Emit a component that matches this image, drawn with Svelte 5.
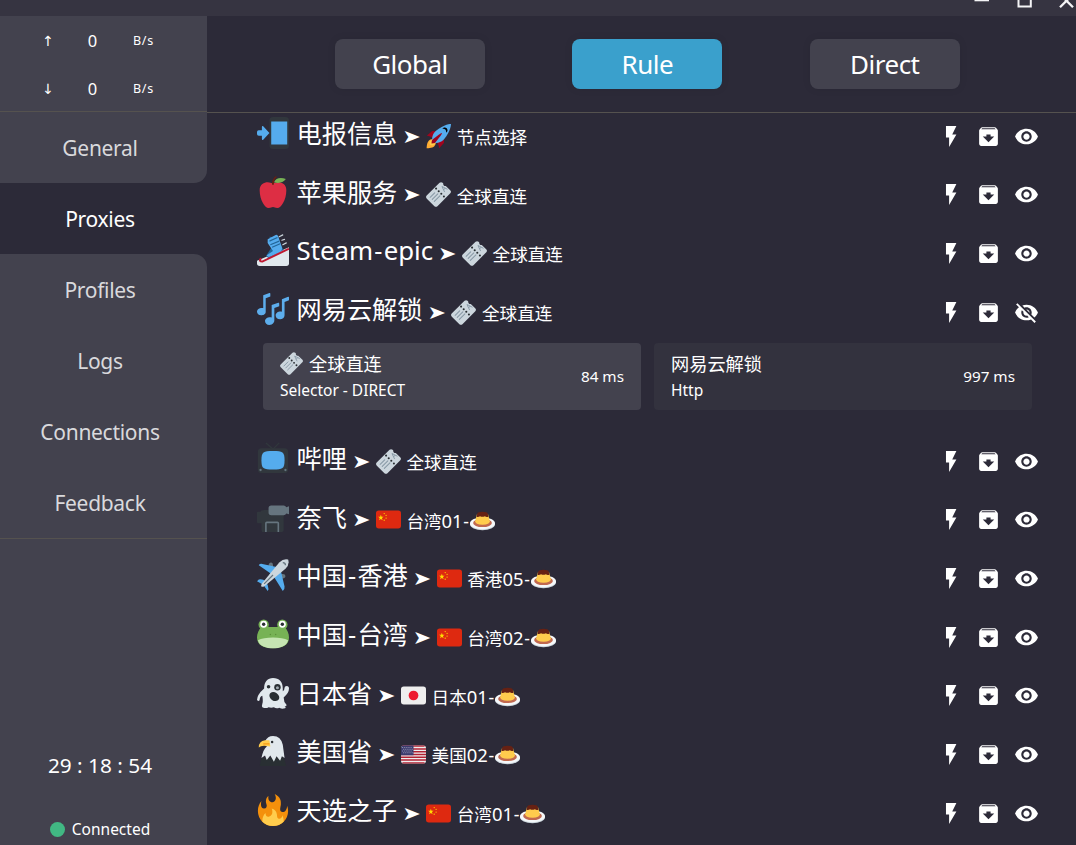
<script>
  const navItems = ['General', 'Proxies', 'Profiles', 'Logs', 'Connections', 'Feedback'];
  const modes = ['Global', 'Rule', 'Direct'];
  const groups = [
    { icon: 'phone', name: '电报信息', nowIcon: 'rocket', now: '节点选择' },
    { icon: 'apple', name: '苹果服务', nowIcon: 'ticket', now: '全球直连' },
    { icon: 'ski', name: 'Steam-epic', nowIcon: 'ticket', now: '全球直连' },
    {
      icon: 'notes', name: '网易云解锁', nowIcon: 'ticket', now: '全球直连',
      proxies: [
        { icon: 'ticket', name: '全球直连', type: 'Selector - DIRECT', delay: '84 ms', selected: true },
        { name: '网易云解锁', type: 'Http', delay: '997 ms' }
      ]
    },
    { icon: 'tv', name: '哔哩', nowIcon: 'ticket', now: '全球直连' },
    { icon: 'camera', name: '奈飞', nowIcon: 'cn', now: '台湾01-', tail: 'custard' },
    { icon: 'plane', name: '中国-香港', nowIcon: 'cn', now: '香港05-', tail: 'custard' },
    { icon: 'frog', name: '中国-台湾', nowIcon: 'cn', now: '台湾02-', tail: 'custard' },
    { icon: 'ghost', name: '日本省', nowIcon: 'jp', now: '日本01-', tail: 'custard' },
    { icon: 'eagle', name: '美国省', nowIcon: 'us', now: '美国02-', tail: 'custard' },
    { icon: 'fire', name: '天选之子', nowIcon: 'cn', now: '台湾01-', tail: 'custard' }
  ];

  // Splits a label into hyphens, Latin runs and CJK runs so each can be sized on its own.
  const runs = (text) =>
    text.match(/-|[A-Za-z0-9]+|[^A-Za-z0-9-]+/g).map((t) => ({
      t,
      kind: t === '-' ? 'hyphen' : /^[A-Za-z0-9]/.test(t) ? 'latin' : 'cjk'
    }));
</script>

{#snippet label(text)}{#each runs(text) as r}<span class={r.kind}>{r.t}</span>{/each}{/snippet}

{#snippet emoji(name, cls)}
  <svg class={cls} viewBox="0 0 36 36" aria-hidden="true">
    {#if name === 'phone'}
      <path fill="#31373D" d="M14 4a4 4 0 0 1 4-4h14a4 4 0 0 1 4 4v28a4 4 0 0 1-4 4H18a4 4 0 0 1-4-4z" />
      <path fill="#55ACEE" d="M16 5h18v26H16zM14 18l-7-7.500q-1.500-1-1.500 1V15H2a2 2 0 0 0-2 2v2a2 2 0 0 0 2 2h3.500v3.500q0 2 1.500 1z" />
    {:else if name === 'rocket'}
      <path fill="#A0041E" d="M1 17l8-7 16 1 1 16-7 8s0-6-6-12-12-6-12-6z" />
      <path fill="#FFAC33" d="M.973 35s-.036-7.979 2.985-11S15 21.187 15 21.187 15 29 12 32 .973 35 .973 35z" />
      <circle fill="#FFCC4D" cx="9" cy="27" r="4" />
      <path fill="#55ACEE" d="M36 0S26 0 14 10c-6 5-6 14-4 16s11 2 16-4C36 10 36 0 36 0z" />
      <path d="M27 5c-1.623 0-3.013.971-3.641 2.360.502-.227 1.055-.360 1.641-.360 2.209 0 4 1.791 4 4 0 .586-.133 1.139-.359 1.640C30.030 12.013 31 10.623 31 9c0-2.209-1.791-4-4-4z" />
      <path fill="#A0041E" d="M8 28s0-4 1-5 13-11 14-10-9 13-10 14-5 1-5 1z" />
    {:else if name === 'apple'}
      <path fill="#DD2E44" d="M24 7c-3 0-3 1-6 1s-3-1-6-1c-4 0-9 2-9 9 0 11 6 20 10 20 3 0 3-1 5-1s2 1 5 1c4 0 10-9 10-20 0-7-5-9-9-9z" />
      <path fill="#77B255" d="M19 7c2-5 8-6 13.500-3.500C29 8 24 8.500 19 7z" />
      <path fill="#662113" d="M18 10c-1 0-1.500-1-1-3 .5-3 2-5.500 4-6.700 1-.6 1.700.7.800 1.400C20 3.500 19 6 19 9c0 .6-.4 1-1 1z" />
    {:else if name === 'ticket'}
      <path fill="#CCD6DD" d="M1 19.500 19.500 1.200q2.200-2 4.400 0l1 1q-.4 1.700.8 2.800t2.800.7l6.300 6q2.200 2.200.2 4.500L16.500 34.800q-2.200 2-4.400 0L1.200 24q-2.200-2.200-.2-4.500z" />
      <g stroke="#8899A6" stroke-width="1.500" stroke-linecap="round">
        <path d="m6 22 6.500-6.500M9 25l8-8M12 28l8-8" />
      </g>
      <path d="m23 6.500 8 4M23 6.500l3.800 8M27.800 8.700l-2.600 2.800" stroke="#8899A6" stroke-width="1.400" fill="none" />
      <g fill="#292F33"><circle cx="14.500" cy="9.500" r="1.500" /><circle cx="18.300" cy="13.300" r="1.500" /><circle cx="22" cy="17" r="1.500" /><circle cx="25.800" cy="20.800" r="1.500" /></g>
    {:else if name === 'ski'}
      <path fill="#E1E8ED" d="M36 15v18q0 3-3 3H3q-3 0-3-3v-3z" />
      <path fill="#226699" d="m14 3 8 1 8 14-17 9-3-2 7-11z" />
      <path fill="#55ACEE" d="M12 6 21 1q2-1 3 2l4 12q1 4-3 6l-9 4q-4 2-5-1l7-5-6-9z" />
      <path stroke="#226699" stroke-width="1.300" d="m14 8 9-4M15 12l10-4M17 15l9-4" />
      <path fill="none" stroke="#BE1931" stroke-width="2.200" stroke-linecap="round" d="m4 28q-2 3 2 3l29-14" />
      <path stroke="#CCD6DD" stroke-width="1.300" stroke-linecap="round" d="m25 3 4-2M28 7l3-1M29 12l4-2" />
    {:else if name === 'notes'}
      <g fill="#5DADEC">
        <path d="M7 2.500 14 0q1-.3 1 1v3L9.800 6v15c0 3-3 4-5 4-3 0-4.800-2-4.800-4 0-3 4-5 7-4z" />
        <path d="M16.500 13.500 24 11q1-.3 1 1v3l-5.500 2v14c0 3-3 5-5.500 5-3 0-5-2-5-4.500 0-3 4-5 7.500-4z" />
        <path d="M28 7 35 4.200q1-.4 1 1v3L31 10v15c0 3-2.500 4.500-5 4.500-3 0-5-2-5-4.300 0-3 4-5 7-4z" />
      </g>
    {:else if name === 'tv'}
      <path fill="none" stroke="#31373D" stroke-width="1.500" d="m10 1 8 7 7-7" />
      <rect x="1" y="7" width="34" height="28" rx="4" fill="#31373D" />
      <path fill="#55ACEE" d="M18 10c11 0 13 1 13 10.500S29 31 18 31 5 30 5 20.500 7 10 18 10z" />
      <circle cx="4" cy="31.500" r="1.300" fill="#66757F" /><circle cx="32" cy="31.500" r="1.300" fill="#66757F" />
    {:else if name === 'camera'}
      <path fill="#31373D" d="M0 13q0-1 1-1h3q0-2 4-2h22v23q0 2-2 2H7q-2 0-2-3v-7H1q-1 0-1-1z" />
      <path fill="#66757F" d="M16 5h14q2 0 3 2l3-1v9l-3-1q-1 2-3 2H16q-3 0-3-3V8q0-3 3-3z" />
      <path fill="none" stroke="#66757F" stroke-width="1.800" d="M10 35V25q0-1 1-1h12q1 0 1 1v10" />
    {:else if name === 'plane'}
      <path fill="#66757F" d="M13 8q0-4 3-4 2 0 2 3v4zM27 22q5 0 5-3 0-2-3-2h-4z" />
      <path fill="#55ACEE" d="M2 7q1-2 4-1.500l16 3.500 5 5 4 17q.5 3-2 5L19 20 10 25q3 5 3 9l-1 2-5-7-7-4 2-2q4-1 8 2l5-9z" />
      <path fill="#CCD6DD" d="M6 27 25 4q5-5 10-3.500Q37 6 32 11L9 30q-3 2-4 1t1-4z" />
      <path fill="none" stroke="#66757F" stroke-width="1.400" d="m8 28 10-10M29 4q3 0 3 3" />
    {:else if name === 'frog'}
      <path fill="#77B255" d="M36 22C36 31 28 34 18 34S0 31 0 22C0 17 2 13 5 10h26c3 3 5 7 5 12z" />
      <circle cx="7.500" cy="7.500" r="5.800" fill="#77B255" /><circle cx="28.500" cy="7.500" r="5.800" fill="#77B255" />
      <circle cx="7.500" cy="7" r="3.900" fill="#fff" /><circle cx="28.500" cy="7" r="3.900" fill="#fff" />
      <circle cx="7.500" cy="7" r="1.900" fill="#292F33" /><circle cx="28.500" cy="7" r="1.900" fill="#292F33" />
      <path fill="#C6E5B3" d="M1 25q6-3 17-3t17 3c-2 7-9 9-17 9S3 32 1 25z" />
      <circle cx="15" cy="18.500" r=".8" fill="#5C913B" /><circle cx="21" cy="18.500" r=".8" fill="#5C913B" />
    {:else if name === 'ghost'}
      <path fill="#E1E8ED" d="M8 13C8 5 12 1 18 1c7 0 11 4 11 12v3q2-1 2-4 0-2 2.500-2T36 13q0 5-6 10 0 5 3 8 1 2-2 2 3 2-1 2.500-2 .5-5-1-3 1.500-6-.5-3 1-6 0-3 2-7 0-1-1 0-4 1-2 0-9-3 1-3 5-1 2-3 0Q0 20 8 13z" />
      <g fill="#292F33"><circle cx="13" cy="11" r="2" /><circle cx="23" cy="11.500" r="3.600" /><ellipse cx="19.500" cy="22" rx="6" ry="4.600" transform="rotate(35 19.500 22)" /></g>
      <circle cx="23" cy="12" r="1.700" fill="#9FA8AF" />
    {:else if name === 'eagle'}
      <path fill="#292F33" d="M5 26 3 35h30l-3-10z" />
      <path fill="#E1E8ED" d="M9 7Q12 1 18 1q9 0 11 10l2 15-3-2-2 5-4-5-3 6-4-7-4 5-2-5-4 3q2-10 6-13z" />
      <path fill="#FFCC4D" d="M14 6H9Q2 7 2 14q2-2 6-2l7 1z" /><path stroke="#F4900C" stroke-width="1.200" d="M7 10h7" />
      <circle cx="17" cy="8" r="1.400" fill="#292F33" />
    {:else if name === 'fire'}
      <path fill="#F4900C" d="M35 19c0-2.062-.367-4.039-1.040-5.868-.460 5.389-3.333 8.157-6.335 6.868-2.812-1.208-.917-5.917-.777-8.164.236-3.809-.012-8.169-6.931-11.794 2.875 5.500.333 8.917-2.333 9.125-2.958.231-5.667-2.542-4.667-7.042-3.238 2.386-3.332 6.402-2.333 9 1.042 2.708-.042 4.958-2.583 5.208-2.840.280-4.418-3.041-2.963-8.333C2.520 10.965 1 14.805 1 19c0 9.389 7.611 17 17 17s17-7.611 17-17z" />
      <path fill="#FFCC4D" d="M28.394 23.999c.148 3.084-2.561 4.293-4.019 3.709-2.106-.843-1.541-2.291-2.083-5.291s-2.625-5.083-5.708-6c2.250 6.333-1.247 8.667-3.080 9.084-1.872.426-3.753-.001-3.968-4.007C7.352 23.668 6 26.676 6 30c0 .368.023.730.055 1.090C9.125 34.124 13.342 36 18 36s8.875-1.876 11.945-4.910c.032-.360.055-.722.055-1.090 0-2.187-.584-4.236-1.606-6.001z" />
    {:else if name === 'custard'}
      <ellipse cx="18" cy="23.500" rx="18" ry="8.500" fill="#CCD6DD" /><ellipse cx="18" cy="22" rx="18" ry="8.500" fill="#F5F8FA" />
      <ellipse cx="18" cy="21.500" rx="13.500" ry="6" fill="#C1694F" />
      <path fill="#FFCC4D" d="M10 9h16l2.500 10q0 5-10.500 5T7.500 19z" />
      <path fill="#662113" d="M10.500 8q1-2.500 7.500-2.500T25.500 8l1 4.500q-3 1-5-.5-4 1.500-7 0-3 1.500-5 .5z" />
    {:else if name === 'cn'}
      <rect y="5" width="36" height="26" rx="4" fill="#DE2910" />
      <path fill="#FFDE02" d="m7 11 1 3h3l-2.400 2 .9 3L7 17.200 4.500 19l.9-3L3 14h3z" />
      <g fill="#FFDE02"><circle cx="11.800" cy="9.500" r=".9" /><circle cx="14.500" cy="12" r=".9" /><circle cx="14.500" cy="16" r=".9" /><circle cx="11.800" cy="19" r=".9" /></g>
    {:else if name === 'jp'}
      <rect y="5" width="36" height="26" rx="4" fill="#EEE" /><circle cx="18" cy="18" r="7" fill="#ED1B2F" />
    {:else if name === 'us'}
      <rect y="5" width="36" height="26" rx="4" fill="#EEE" />
      <path stroke="#B22334" stroke-width="2" d="M2 6h32M0 10h36M0 14h36M0 18h36M0 22h36M0 26h36M2 30h32" />
      <path fill="#3C3B6E" d="M4 5h14v14H0V9q0-4 4-4z" />
      <path stroke="#fff" stroke-width="1" stroke-dasharray="1 2" d="M2 8h15M3.500 10.500h14M2 13h15M3.500 15.500h14" />
    {/if}
  </svg>
{/snippet}

<div class="window">
  <header class="titlebar">
    <svg width="104" height="16" viewBox="0 0 104 16" fill="none" stroke="#f4f4f6">
      <path stroke-width="2.600" d="M2.500 0h14.500" />
      <path stroke-width="2" d="M46.500-6v12.500h12.300V-6" />
      <path stroke-width="2.300" d="m88 7.300 13-13M101 7.300l-13-13" />
    </svg>
  </header>
  <div class="body">
    <aside>
      <div class="traffic">
        <div><i>↑</i><b>0</b><span>B/s</span></div>
        <div><i>↓</i><b>0</b><span>B/s</span></div>
      </div>
      <nav>
        {#each navItems as item, i}
          <div class="nav-item" class:active={i === 1} class:before={i === 0} class:after={i === 2}><span>{item}</span></div>
        {/each}
      </nav>
      <div class="status">
        <div class="time">29 : 18 : 54</div>
        <div class="connected"><i></i><span>Connected</span></div>
      </div>
    </aside>
    <main>
      <div class="modes">
        {#each modes as mode}
          <button class:chosen={mode === 'Rule'}>{mode}</button>
        {/each}
      </div>
      <div class="list">
        {#each groups as g}
          <div class="group">
            {@render emoji(g.icon, 'big')}
            <span class="name">{@render label(g.name)}</span>
            <span class="arrow">➤</span>
            {@render emoji(g.nowIcon, 'small')}
            <span class="now">{@render label(g.now)}</span>
            {#if g.tail}{@render emoji(g.tail, 'small tail')}{/if}
            <div class="actions">
              <svg class="bolt" viewBox="0 0 24 24"><path d="M7 2v11h3v9l7-12h-4l4-8z" /></svg>
              <svg viewBox="0 0 24 24"><path d="M20.540 5.230l-1.390-1.680C18.880 3.210 18.470 3 18 3H6c-.470 0-.880.210-1.160.550L3.460 5.230C3.170 5.570 3 6.020 3 6.500V19c0 1.100.9 2 2 2h14c1.100 0 2-.9 2-2V6.500c0-.480-.170-.930-.460-1.270zM12 17.500L6.500 12H10v-2h4v2h3.500L12 17.500zM5.120 5l.810-1h12l.940 1H5.120z" /></svg>
              {#if g.proxies}
                <svg viewBox="0 0 24 24"><path d="M12 7c2.760 0 5 2.240 5 5 0 .650-.130 1.260-.360 1.830l2.920 2.920c1.510-1.260 2.700-2.890 3.430-4.750-1.730-4.390-6-7.500-11-7.500-1.400 0-2.740.250-3.980.7l2.160 2.160C10.740 7.130 11.350 7 12 7zM2 4.270l2.280 2.280.460.460C3.080 8.300 1.780 10.020 1 12c1.730 4.390 6 7.500 11 7.500 1.550 0 3.030-.3 4.380-.840l.420.420L19.730 22 21 20.730 3.270 3 2 4.270zM7.530 9.800l1.550 1.550c-.050.210-.080.430-.080.650 0 1.660 1.340 3 3 3 .220 0 .440-.030.650-.080l1.550 1.550c-.670.330-1.410.530-2.200.530-2.760 0-5-2.240-5-5 0-.790.2-1.530.530-2.200zm4.310-.780l3.150 3.150.020-.160c0-1.660-1.340-3-3-3l-.170.010z" /></svg>
              {:else}
                <svg viewBox="0 0 24 24"><path d="M12 4.500C7 4.500 2.730 7.610 1 12c1.730 4.390 6 7.500 11 7.500s9.270-3.110 11-7.500c-1.730-4.390-6-7.500-11-7.500zM12 17c-2.760 0-5-2.240-5-5s2.240-5 5-5 5 2.240 5 5-2.240 5-5 5zm0-8c-1.660 0-3 1.340-3 3s1.340 3 3 3 3-1.340 3-3-1.340-3-3-3z" /></svg>
              {/if}
            </div>
          </div>
          {#if g.proxies}
            <div class="proxies">
              {#each g.proxies as p}
                <div class="proxy" class:selected={p.selected}>
                  <div class="info">
                    <div class="pname">{#if p.icon}{@render emoji(p.icon, 'tiny')}{/if}<span>{p.name}</span></div>
                    <div class="ptype">{p.type}</div>
                  </div>
                  <div class="delay">{p.delay}</div>
                </div>
              {/each}
            </div>
          {/if}
        {/each}
      </div>
    </main>
  </div>
</div>

<style>
  :global(body) { margin: 0; background: #2c2a38; overflow: hidden; }
  .window { width: 1076px; height: 845px; overflow: hidden; display: flex; flex-direction: column; background: #2c2a38; color: #fff; font-family: "Noto Sans", "Noto Sans CJK SC", sans-serif; }
  .titlebar { height: 16px; flex: none; background: #363441; display: flex; justify-content: flex-end; }
  .body { flex: 1; display: flex; min-height: 0; }
  aside { width: 207px; flex: none; display: flex; flex-direction: column; background: #2c2a38; }
  .traffic { height: 95px; box-sizing: border-box; padding-top: 1px; background: #43424e; }
  .traffic div { height: 47.500px; display: grid; grid-template-columns: 50px 39px 63px; padding-left: 23px; align-items: center; text-align: center; line-height: 48px; }
  .traffic i { font: 14px/48px "DejaVu Sans", sans-serif; }
  .traffic b { font-weight: 400; font-size: 16.500px; }
  .traffic span { font-size: 12.500px; letter-spacing: .8px; }
  nav { border-top: 1px solid #55524f; background: #2c2a38; }
  .nav-item { height: 71px; background: #43424e; color: #d9d9dc; display: flex; align-items: center; justify-content: center; padding: 1px 7px 0 0; box-sizing: border-box; font-size: 21px; letter-spacing: -.3px; }
  .nav-item.active { background: #2c2a38; color: #fff; }
  .nav-item.before { border-bottom-right-radius: 13px; }
  .nav-item.after { border-top-right-radius: 13px; }
  .status { flex: 1; border-top: 1px solid #55524f; background: #43424e; display: flex; flex-direction: column; align-items: center; justify-content: flex-end; padding-right: 7px; }
  .time { height: 40px; line-height: 40px; font-size: 20.800px; margin-bottom: 28px; }
  .connected { height: 32px; display: flex; align-items: center; gap: 7px; font-size: 15.500px; }
  .connected i { width: 15px; height: 15px; border-radius: 50%; background: #41b883; }
  main { flex: 1; display: flex; flex-direction: column; min-width: 0; }
  .modes { height: 96px; flex: none; border-bottom: 1px solid #55524f; display: flex; gap: 87.400px; padding: 0 0 0 128px; align-items: center; }
  .modes button { width: 150px; height: 50px; padding: 0; border: 0; border-radius: 8px; background: #43424e; color: #fff; font: 26px/48px "Noto Sans", sans-serif; letter-spacing: -.5px; box-shadow: 0 0 8px rgba(0, 0, 0, .08); }
  .modes button.chosen { background: #3aa0cc; }
  .list { flex: 1; min-height: 0; overflow: hidden; display: flex; flex-direction: column; }
  .group { height: 58.650px; flex: none; display: flex; align-items: center; padding: 0 37px 0 50px; white-space: nowrap; }
  .group:first-child { margin-top: -6.200px; }
  svg { display: block; flex: none; }
  .big { width: 32px; height: 32px; margin: -6px 7.500px 0 0; }
  .name { font-size: 25.200px; line-height: 36px; margin-top: -6px; }
  .name .latin { font-size: 25.800px; }
  .name .hyphen { padding: 0 1.200px; }
  .arrow { font: 22px/24px "DejaVu Sans", sans-serif; width: 16px; margin: 1px 8px 0 5px; transform: scaleY(.86); }
  .small { width: 25px; height: 25px; }
  .tail { margin-top: 1px; }
  .now { font-size: 17.600px; line-height: 26px; margin: 2px 0 0 5.500px; }
  .now .latin { font-size: 18.400px; }
  .now .hyphen { padding: 0 .7px; }
  .actions { margin-left: auto; display: flex; gap: 13px; }
  .actions svg { width: 25px; height: 25px; fill: #fff; }
  .actions .bolt { padding-left: .7px; margin-right: -.7px; }
  .proxies { height: 90.500px; flex: none; display: flex; gap: 13px; padding: 2px 0 0 56px; box-sizing: border-box; }
  .proxy { width: 378px; height: 67px; box-sizing: border-box; border-radius: 4px; background: #33323e; display: flex; align-items: center; justify-content: space-between; padding: 0 17px 1px; }
  .proxy.selected { background: #43424e; }
  .pname { display: flex; align-items: center; font-size: 18.200px; line-height: 26px; height: 26px; }
  .tiny { width: 23px; height: 23px; margin-right: 6px; }
  .ptype { font-size: 15.500px; line-height: 24px; padding-top: 1.500px; }
  .delay { font-size: 15.300px; }
</style>
